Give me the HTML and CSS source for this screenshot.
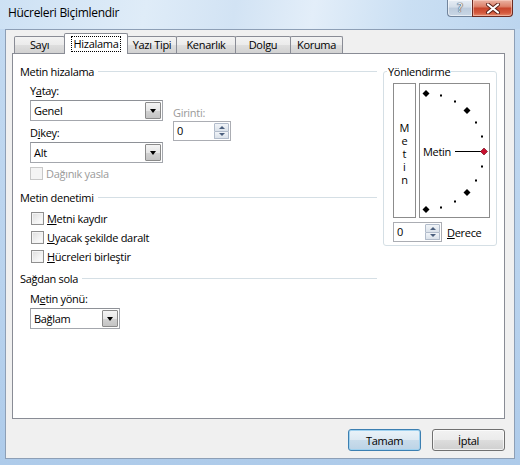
FILE: index.html
```html
<!DOCTYPE html>
<html lang="tr">
<head>
<meta charset="utf-8">
<title>Hücreleri Biçimlendir</title>
<link rel="stylesheet" href="styles.css">
</head>
<body>
<div class="window">
  <div class="titlebar">
    <span class="title">Hücreleri Biçimlendir</span>
    <div class="caps">
      <div class="cap help"><span>?</span></div>
      <div class="cap close">
        <svg width="16" height="11" viewBox="0 0 16 11"><path d="M3 1.5 L13 9.5 M13 1.5 L3 9.5" stroke="#5a2018" stroke-width="4" stroke-linecap="round"/><path d="M3 1.5 L13 9.5 M13 1.5 L3 9.5" stroke="#ffffff" stroke-width="2.2" stroke-linecap="round"/></svg>
      </div>
    </div>
  </div>
  <div class="client">
    <div class="tabs">
      <div class="tab t1">Sayı</div>
      <div class="tab active"><span class="focus">Hizalama</span></div>
      <div class="tab t3">Yazı Tipi</div>
      <div class="tab t4">Kenarlık</div>
      <div class="tab t5">Dolgu</div>
      <div class="tab t6">Koruma</div>
    </div>
    <div class="panel">
      <div class="leftcol">
        <div class="gtitle">Metin hizalama</div>
        <div class="align-row">
          <div class="subcol">
            <div class="lbl">Y<u>a</u>tay:</div>
            <div class="select sel-wide"><span class="val">Genel</span><span class="arrow"><i></i></span></div>
            <div class="lbl lbl-gap">D<u>i</u>key:</div>
            <div class="select sel-wide"><span class="val">Alt</span><span class="arrow"><i></i></span></div>
            <div class="check disabled first"><span class="box"></span><span>Dağınık yasla</span></div>
          </div>
          <div class="subcol indent">
            <div class="lbl dis">Girinti:</div>
            <div class="spin spin-indent"><span class="val">0</span><span class="spinbtns"><span class="sb up"><i></i></span><span class="sb down"><i></i></span></span></div>
          </div>
        </div>
        <div class="gtitle g2">Metin denetimi</div>
        <div class="checks">
          <div class="check"><span class="box"></span><span><u>M</u>etni kaydır</span></div>
          <div class="check"><span class="box"></span><span><u>U</u>yacak şekilde daralt</span></div>
          <div class="check"><span class="box"></span><span><u>H</u>ücreleri birleştir</span></div>
        </div>
        <div class="gtitle g3">Sağdan sola</div>
        <div class="rtl">
          <div class="lbl">M<u>e</u>tin yönü:</div>
          <div class="select sel-narrow"><span class="val">Bağlam</span><span class="arrow"><i></i></span></div>
        </div>
      </div>
      <fieldset class="orient">
        <legend>Yönlendirme</legend>
        <div class="orient-body">
          <div class="boxes">
            <div class="vtext"><span class="vword">Metin</span></div>
            <div class="dial">
              <svg width="69" height="133" viewBox="0 0 69 133">
                <g fill="#000">
                  <polygon points="6,6 9.5,9.5 6,13 2.5,9.5"/>
                  <rect x="20" y="10.5" width="2" height="2"/>
                  <rect x="34" y="16.5" width="2" height="2"/>
                  <polygon points="47,23 50.5,26.5 47,30 43.5,26.5"/>
                  <rect x="55" y="37.5" width="2" height="2"/>
                  <rect x="61" y="51.5" width="2" height="2"/>
                  <rect x="61" y="81.5" width="2" height="2"/>
                  <rect x="55" y="95.5" width="2" height="2"/>
                  <polygon points="47,105 50.5,108.5 47,112 43.5,108.5"/>
                  <rect x="34" y="116.5" width="2" height="2"/>
                  <rect x="20" y="122.5" width="2" height="2"/>
                  <polygon points="6,122 9.5,125.5 6,129 2.5,125.5"/>
                </g>
                <rect x="35" y="67" width="27" height="1" fill="#000"/>
                <polygon points="64,64 67.5,67.5 64,71 60.5,67.5" fill="#c8102e" stroke="#6a0010" stroke-width="0.6"/>
              </svg>
              <span class="dial-label">Metin</span>
            </div>
          </div>
          <div class="deg-row">
            <div class="spin spin-deg"><span class="val">0</span><span class="spinbtns"><span class="sb up"><i></i></span><span class="sb down"><i></i></span></span></div>
            <span class="deg-lbl"><u>D</u>erece</span>
          </div>
        </div>
      </fieldset>
    </div>
    <div class="actions">
      <button class="btn default">Tamam</button>
      <button class="btn">İptal</button>
    </div>
  </div>
</div>
</body>
</html>
```
FILE: styles.css
```css
* { box-sizing: border-box; }
html, body { margin: 0; padding: 0; }
body {
  width: 520px;
  height: 465px;
  overflow: hidden;
  font-family: "Open Sans", "Noto Sans", sans-serif;
  font-size: 11px;
  letter-spacing: -0.3px;
  color: #000;
}
u { text-decoration: underline; text-underline-offset: 1px; }

.window {
  width: 520px;
  height: 465px;
  display: flex;
  flex-direction: column;
  background: linear-gradient(180deg, #c3daf1 0%, #b9d3ee 60%, #aecbea 100%);
}

.titlebar {
  height: 29px;
  flex: none;
  display: flex;
  justify-content: space-between;
  align-items: flex-start;
  background: linear-gradient(100deg, #cde1f4 0%, #dfecf8 28%, #d2e3f4 45%, #e3eef9 60%, #cadff3 78%, #bcd5ef 100%);
}
.title {
  padding: 5px 0 0 8px;
  font-size: 12px;
  line-height: 15px;
  color: #000;
}
.caps { display: flex; margin-right: 7px; }
.cap { height: 17px; display: flex; align-items: center; justify-content: center; }
.help {
  width: 25px;
  border: 1px solid #71849c;
  border-top: none;
  border-right: none;
  border-radius: 0 0 0 4px;
  background: linear-gradient(180deg, #e6edf5 0%, #d3dde8 45%, #bccbdc 50%, #c9d7e5 100%);
  box-shadow: inset 0 0 0 1px rgba(255,255,255,0.55);
}
.help span {
  font-family: "DejaVu Sans", sans-serif;
  font-size: 12px;
  line-height: 12px;
  letter-spacing: 0;
  color: #f4f6f9;
  text-shadow: 0 0 1px #3f4d5e, 0 0 1px #3f4d5e, 0 0 1px #3f4d5e;
}
.close {
  width: 41px;
  border: 1px solid #6b2a22;
  border-top: none;
  border-radius: 0 0 4px 0;
  background: linear-gradient(180deg, #eab3a3 0%, #dd826b 40%, #c8472d 52%, #d4593e 80%, #e48c6e 100%);
  box-shadow: inset 0 0 0 1px rgba(255,220,210,0.5);
}

.client {
  flex: 1;
  margin: 0 5px 6px 5px;
  background: #f0f0f0;
  border: 1px solid #8d9fb6;
  padding: 3px 9px 7px 6px;
  display: flex;
  flex-direction: column;
}

.tabs {
  height: 21px;
  flex: none;
  display: flex;
  align-items: flex-end;
  padding-left: 2px;
  margin-bottom: -1px;
  position: relative;
  z-index: 1;
}
.tab {
  height: 17px;
  margin-bottom: 1px;
  margin-right: -1px;
  line-height: 15px;
  text-align: center;
  border: 1px solid #898c95;
  border-bottom: none;
  border-radius: 2px 2px 0 0;
  background: linear-gradient(180deg, #f3f3f3 0%, #ebebeb 50%, #dedede 51%, #d2d2d2 100%);
  white-space: nowrap;
}
.t1 { width: 51px; margin-right: 0; }
.t3 { width: 50px; }
.t4 { width: 60px; }
.t5 { width: 56px; }
.t6 { width: 53px; }
.tab.active {
  width: 64px;
  height: 21px;
  margin: 0 -1px 0 -1px;
  padding-top: 2px;
  background: #fff;
  position: relative;
  z-index: 2;
}
.focus {
  display: inline-block;
  outline: 1px dotted #000;
  outline-offset: 0;
  padding: 0 2px;
  line-height: 14px;
}

.panel {
  height: 366px;
  flex: none;
  border: 1px solid #898c95;
  background: #fff;
  display: flex;
  gap: 6px;
  padding: 10px 7px 0 7px;
}

.leftcol { width: 357px; flex: none; }
.gtitle {
  height: 15px;
  line-height: 15px;
  display: flex;
  align-items: center;
  gap: 4px;
  white-space: nowrap;
}
.gtitle::after {
  content: "";
  flex: 1;
  height: 1px;
  background: #d5dfe5;
}
.g2 { margin-top: 9px; }
.g3 { margin-top: 7px; }

.lbl { height: 15px; line-height: 15px; white-space: nowrap; }
.lbl.dis { color: #9a9a9a; }

.align-row { display: flex; margin-top: 4px; padding-left: 10px; gap: 10px; }
.subcol { display: flex; flex-direction: column; }
.select { margin-top: 2px; }
.lbl-gap { margin-top: 4px; }
.indent .lbl { margin-top: 22px; }
.indent .spin { margin-top: 1px; }

.select {
  height: 21px;
  display: flex;
  align-items: stretch;
  border: 1px solid #a4a7ad;
  border-top-color: #8e9197;
  background: #fff;
}
.sel-wide { width: 133px; }
.sel-narrow { width: 90px; }
.select .val { flex: 1; padding-left: 3px; line-height: 19px; }
.select .arrow {
  width: 16px;
  margin: 1px;
  border: 1px solid #8a8a8a;
  border-radius: 1px;
  background: linear-gradient(180deg, #f4f4f4 0%, #e6e6e6 50%, #d2d2d2 51%, #c4c4c4 100%);
  display: flex;
  align-items: center;
  justify-content: center;
}
.select .arrow i {
  width: 0;
  height: 0;
  border-left: 3.5px solid transparent;
  border-right: 3.5px solid transparent;
  border-top: 4px solid #000;
}

.spin {
  height: 20px;
  display: flex;
  border: 1px solid #abadb3;
  background: #fff;
}
.spin-indent { width: 58px; }
.spin-deg { width: 49px; }
.spin .val { flex: 1; padding-left: 3px; line-height: 18px; }
.spinbtns { width: 16px; display: flex; flex-direction: column; padding: 1px 1px 1px 0; }
.sb {
  flex: 1;
  border: 1px solid #b2bccb;
  background: linear-gradient(180deg, #f1f4f8 0%, #dbe2ea 100%);
  display: flex;
  align-items: center;
  justify-content: center;
}
.sb.up { border-radius: 1px 1px 0 0; }
.sb.down { border-radius: 0 0 1px 1px; border-top: none; }
.sb i { width: 0; height: 0; border-left: 3px solid transparent; border-right: 3px solid transparent; }
.sb.up i { border-bottom: 3px solid #4c607e; }
.sb.down i { border-top: 3px solid #4c607e; }

.check {
  height: 15px;
  display: flex;
  align-items: center;
  gap: 3px;
  white-space: nowrap;
}
.check .box {
  width: 13px;
  height: 13px;
  border: 1px solid #8f8f8f;
  background: linear-gradient(135deg, #dcdcdc 0%, #f3f3f3 60%, #ffffff 100%);
  box-shadow: inset 0 0 0 1px #f4f4f4;
}
.check.disabled { color: #9a9a9a; }
.check.disabled .box { border-color: #c8c8c8; background: #f4f4f4; box-shadow: none; }
.check.first { margin-top: 3px; }

.checks { display: flex; flex-direction: column; gap: 4px; margin-top: 6px; padding-left: 11px; }
.rtl { margin-top: 5px; padding-left: 10px; }

.orient {
  width: 114px;
  height: 182px;
  margin: 0;
  padding: 0;
  border: 1px solid #d5dfe5;
  border-radius: 3px;
  min-width: 0;
}
.orient legend {
  margin-left: 3px;
  padding: 0 1px;
  line-height: 15px;
}
.orient-body { padding: 4px 6px 0 9px; }
.boxes { display: flex; gap: 3px; height: 135px; }
.vtext {
  width: 23px;
  border: 1px solid #8c8c8c;
  display: flex;
  align-items: center;
  justify-content: center;
  padding-top: 3px;
}
.vword {
  writing-mode: vertical-lr;
  text-orientation: upright;
  letter-spacing: -2px;
  line-height: 13px;
}
.dial {
  width: 71px;
  border: 1px solid #8c8c8c;
  position: relative;
}
.dial svg { display: block; }
.dial-label {
  position: absolute;
  left: 3px;
  top: 60px;
  line-height: 15px;
}
.deg-row { display: flex; align-items: center; gap: 5px; margin-top: 4px; }

.actions {
  display: flex;
  justify-content: flex-end;
  gap: 11px;
  margin-top: 10px;
}
.btn {
  width: 73px;
  height: 22px;
  font-family: inherit;
  font-size: 11px;
  letter-spacing: -0.3px;
  color: #000;
  padding: 0;
  border: 1px solid #707070;
  border-radius: 3px;
  background: linear-gradient(180deg, #f2f2f2 0%, #ebebeb 50%, #dddddd 51%, #cfcfcf 100%);
  box-shadow: inset 0 0 0 1px rgba(255,255,255,0.7);
}
.btn.default {
  border-color: #3c7fb1;
  background: linear-gradient(180deg, #eaf3f9 0%, #dde9f2 50%, #c9dceb 51%, #bcd3e6 100%);
  box-shadow: inset 0 0 0 1px #9fd1ef;
}
```
